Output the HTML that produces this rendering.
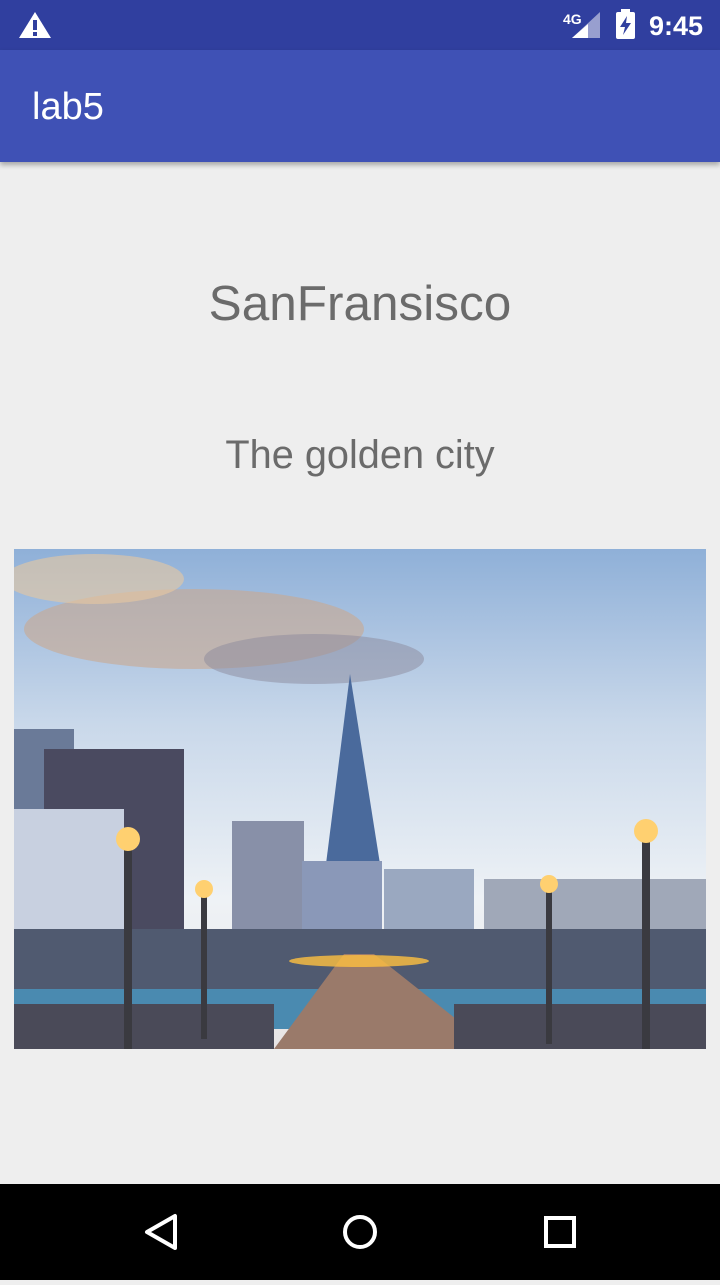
<!DOCTYPE html>
<html><head><meta charset="utf-8"><style>
*{margin:0;padding:0;box-sizing:border-box}
body{width:720px;height:1280px;background:#eeeeee;font-family:"Liberation Sans",sans-serif;position:relative;overflow:hidden}
.sb{position:absolute;top:0;left:0;width:720px;height:50px;background:#303f9f}
.tb{position:absolute;top:50px;left:0;width:720px;height:112px;background:#3f51b5;box-shadow:0 3px 5px rgba(0,0,0,.3)}
.tb span{position:absolute;left:32px;top:36px;color:#fff;font-size:38px}
.t1{position:absolute;top:275px;width:720px;text-align:center;font-size:49.5px;color:#6b6b6b}
.t2{position:absolute;top:433px;width:720px;text-align:center;font-size:39.7px;color:#6b6b6b}
.nav{position:absolute;top:1184px;left:0;width:720px;height:96px;background:#000}
</style></head><body>
<div class="sb">
<svg width="720" height="50" style="position:absolute;left:0;top:0">
<polygon points="35,12 51,38 19,38" fill="#fff"/><rect x="33" y="20" width="4" height="10" fill="#303f9f"/><rect x="33" y="32" width="4" height="4" fill="#303f9f"/>
<text x="563" y="24" font-size="14" font-weight="bold" fill="#fff" font-family="Liberation Sans">4G</text>
<polygon points="600,12 600,38 572,38" fill="#fff" opacity="0.5"/><polygon points="588,24 588,38 572,38" fill="#fff"/>
<rect x="616" y="12" width="19" height="27" rx="2" fill="#fff"/><rect x="621" y="9" width="9" height="4" fill="#fff"/>
<polygon points="627,16 620,27 625,27 623,35 631,23 626,23" fill="#303f9f"/>
<text x="649" y="35" font-size="27" font-weight="bold" fill="#fff" font-family="Liberation Sans">9:45</text>
</svg></div>
<div class="tb"><span>lab5</span></div>
<div class="t1">SanFransisco</div>
<div class="t2">The golden city</div>
<svg style="position:absolute;left:14px;top:549px" width="692" height="500">
<defs><linearGradient id="sky" x1="0" y1="0" x2="0" y2="1">
<stop offset="0" stop-color="#8fb0d8"/><stop offset="0.35" stop-color="#c9d8ea"/><stop offset="0.7" stop-color="#eef2f6"/><stop offset="1" stop-color="#e8e4e4"/></linearGradient></defs>
<rect width="692" height="500" fill="url(#sky)"/>
<ellipse cx="180" cy="80" rx="170" ry="40" fill="#c9a890" opacity=".6"/>
<ellipse cx="300" cy="110" rx="110" ry="25" fill="#8c8a9c" opacity=".5"/>
<ellipse cx="80" cy="30" rx="90" ry="25" fill="#e8c8a0" opacity=".6"/>
<rect x="0" y="180" width="60" height="230" fill="#6a7a98"/>
<rect x="30" y="200" width="140" height="210" fill="#4a4a60"/>
<rect x="0" y="260" width="110" height="150" fill="#c8d0e0"/>
<rect x="218" y="272" width="72" height="140" fill="#8890a8"/>
<polygon points="336,125 312,315 366,315" fill="#4a6a9c"/>
<rect x="288" y="312" width="80" height="100" fill="#8a98b8"/>
<rect x="370" y="320" width="90" height="90" fill="#9aa8c0"/>
<rect x="470" y="330" width="222" height="80" fill="#a0a8b8"/>
<rect x="0" y="380" width="692" height="60" fill="#505a70"/>
<rect x="0" y="440" width="692" height="40" fill="#4a8ab0"/>
<polygon points="260,500 330,405 360,405 480,500" fill="#9a7a6a"/>
<rect x="0" y="455" width="260" height="45" fill="#4a4a58"/>
<rect x="440" y="455" width="252" height="45" fill="#4a4a58"/>
<rect x="110" y="290" width="8" height="210" fill="#3a3a40"/><circle cx="114" cy="290" r="12" fill="#ffd070"/>
<rect x="628" y="285" width="8" height="215" fill="#3a3a40"/><circle cx="632" cy="282" r="12" fill="#ffd070"/>
<rect x="532" y="335" width="6" height="160" fill="#3a3a40"/><circle cx="535" cy="335" r="9" fill="#ffd070"/>
<rect x="187" y="340" width="6" height="150" fill="#3a3a40"/><circle cx="190" cy="340" r="9" fill="#ffd070"/>
<ellipse cx="345" cy="412" rx="70" ry="6" fill="#ffc040" opacity=".8"/>
</svg>
<div class="nav">
<svg width="720" height="96">
<polygon points="175,32 175,64 147,48" fill="none" stroke="#fff" stroke-width="4" stroke-linejoin="round"/>
<circle cx="360" cy="48" r="15" fill="none" stroke="#fff" stroke-width="4"/>
<rect x="546" y="34" width="28" height="28" fill="none" stroke="#fff" stroke-width="4"/>
</svg></div>
</body></html>
